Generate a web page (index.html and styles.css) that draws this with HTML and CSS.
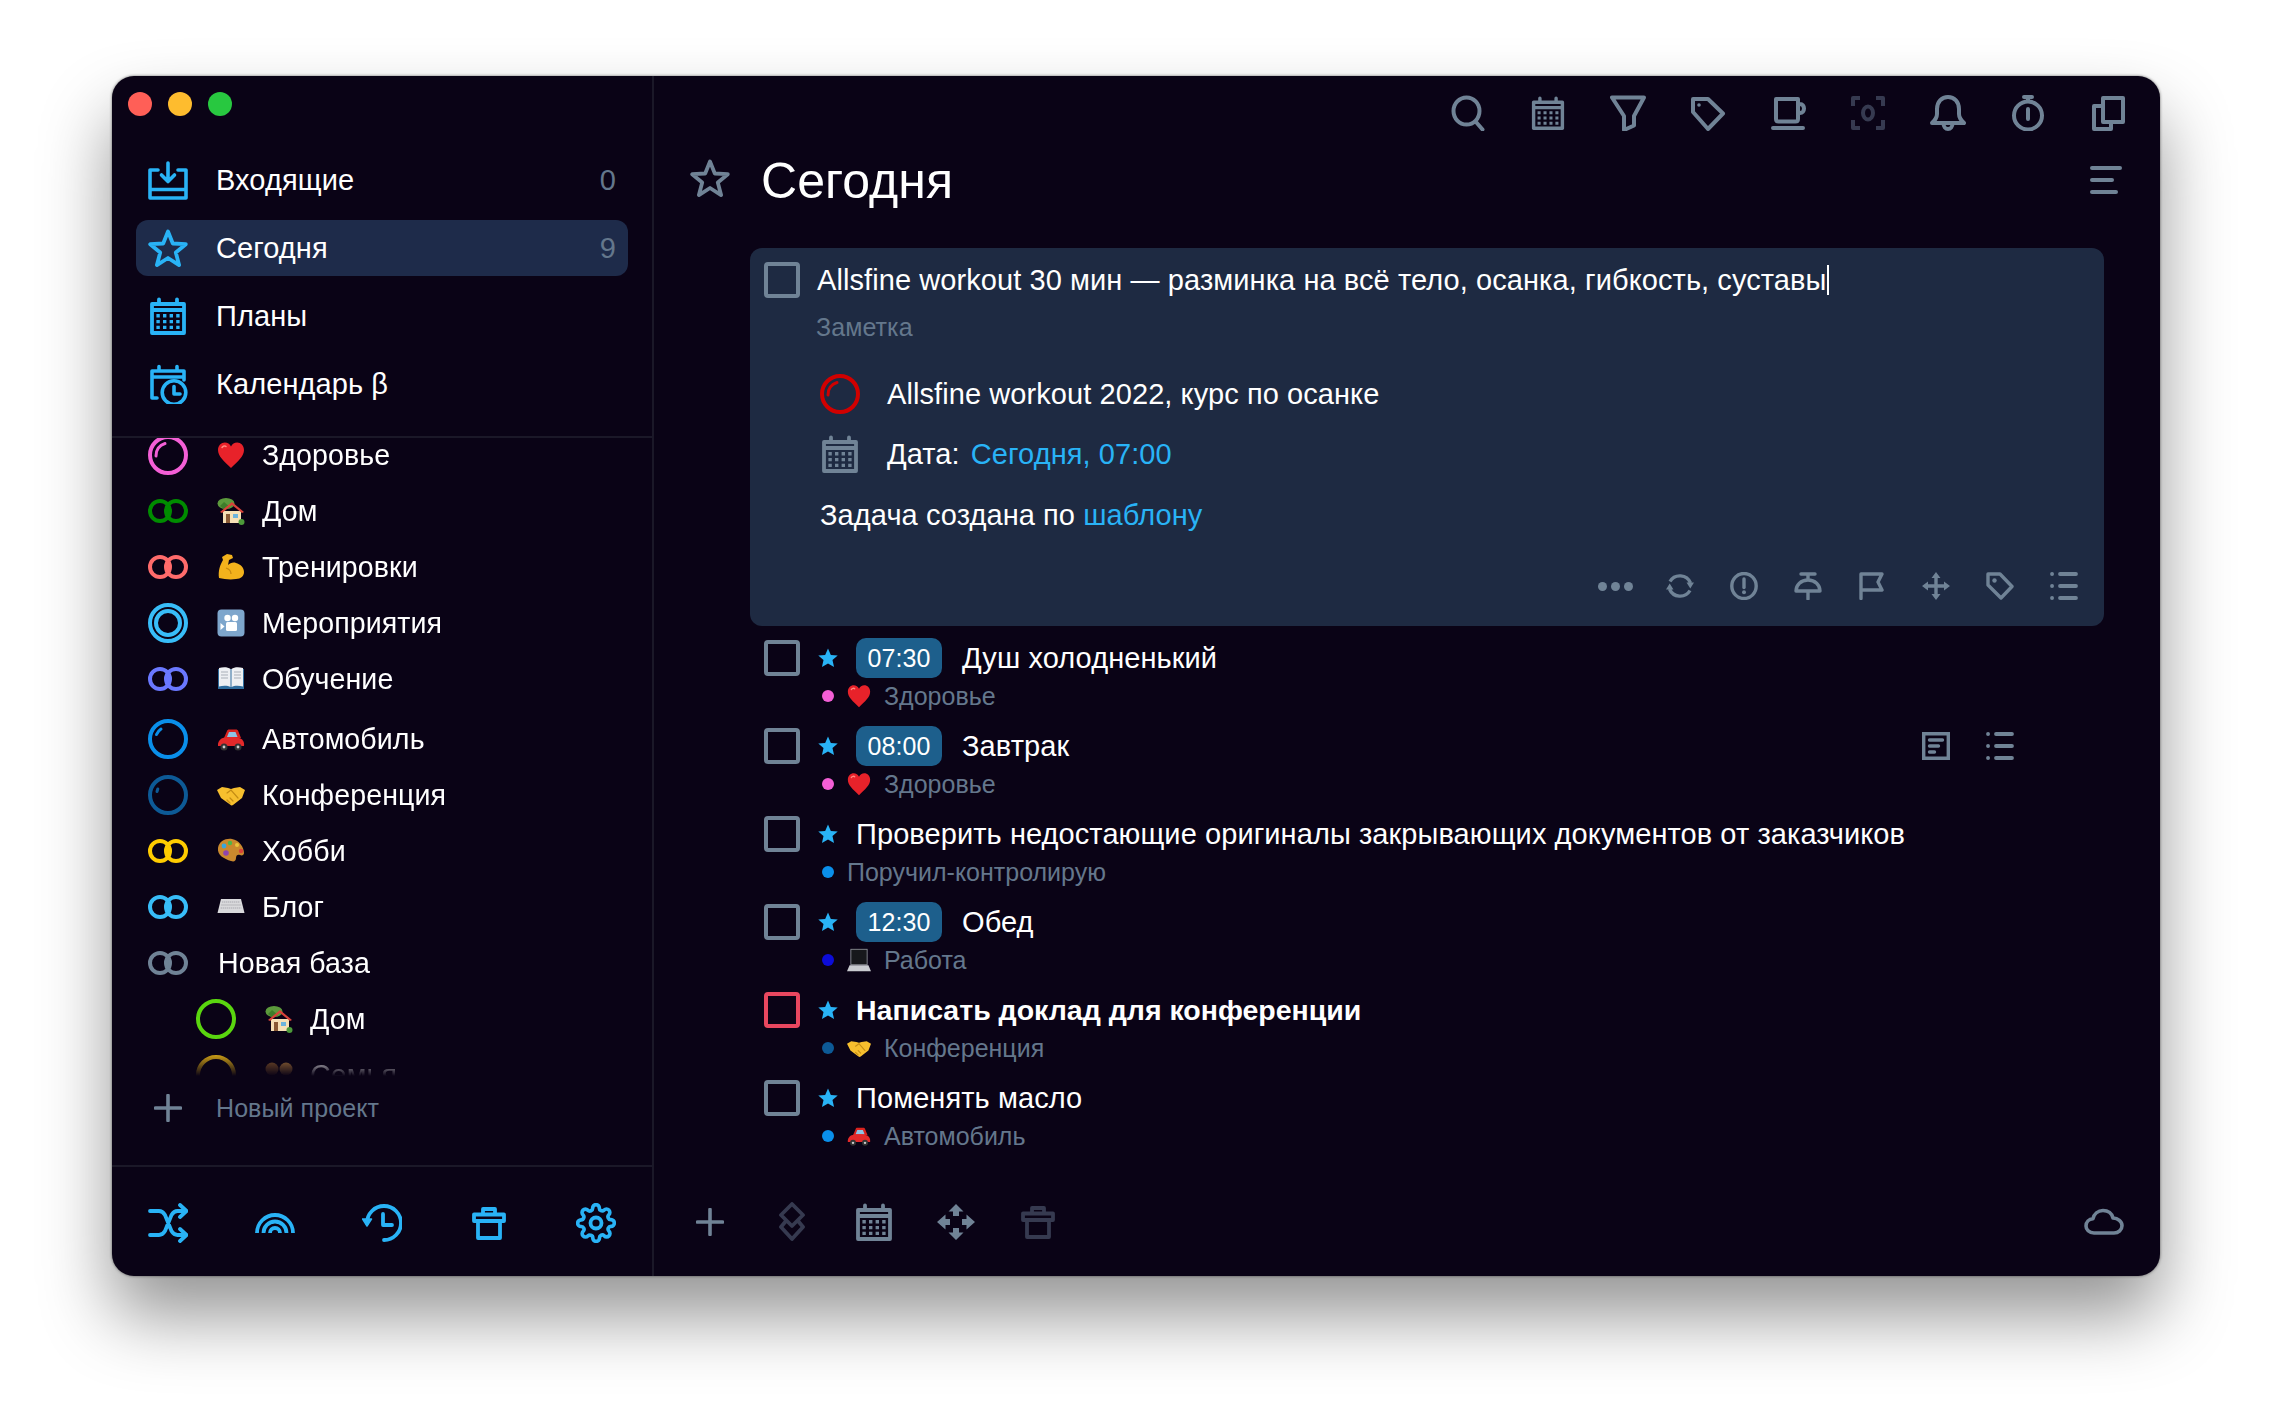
FILE: index.html
```html
<!DOCTYPE html>
<html lang="ru">
<head>
    <meta charset="UTF-8">
    <title>Сегодня</title>
    <link rel="stylesheet" href="styles.css">
</head>
<body>

<!-- Icon sprite -->
<svg class="sprite" xmlns="http://www.w3.org/2000/svg">
    <symbol id="i-inbox" viewBox="0 0 40 40"><path d="M10 10H2v28h36V10h-8M2 29.500h36M20 3v18M13.500 15l6.500 6.500 6.500-6.500" fill="none" stroke="currentColor" stroke-width="3.600" stroke-linejoin="round" stroke-linecap="round"/></symbol>
    <symbol id="i-star" viewBox="0 0 40 40"><path d="M20 3.500l4.800 12 13 .7-10 8.300 3.300 12.600L20 30l-11.100 7.100 3.300-12.600-10-8.300 13-.7z" fill="none" stroke="currentColor" stroke-width="3.800" stroke-linejoin="round"/></symbol>
    <symbol id="i-star-solid" viewBox="0 0 24 24"><path d="M12 1.500l3.100 7.100 7.500.7-5.700 5 1.700 7.500-6.600-3.900-6.600 3.900 1.700-7.500-5.700-5 7.500-.7z" fill="currentColor"/></symbol>
    <symbol id="i-cal" viewBox="0 0 40 40"><path d="M4 8h32v29H4zM4 14h32M11 3.500V8M29 3.500V8" fill="none" stroke="currentColor" stroke-width="3.800" stroke-linejoin="round" stroke-linecap="round"/><path d="M8.400 19.800h23.200M8.400 25.600h23.200M8.400 31.400h23.200" fill="none" stroke="currentColor" stroke-width="3.400" stroke-dasharray="3.400 3.200"/></symbol>
    <symbol id="i-cal-clock" viewBox="0 0 40 40"><path d="M4 34V7h32v9M4 13h32M11 2.500V7M29 2.500V7M4 34h5" fill="none" stroke="currentColor" stroke-width="3.600" stroke-linejoin="round" stroke-linecap="round"/><circle cx="26" cy="28.500" r="11.800" fill="#0a0316" stroke="currentColor" stroke-width="3.600"/><path d="M26 22.500v7.500h6" fill="none" stroke="currentColor" stroke-width="3.600" stroke-linecap="round" stroke-linejoin="round"/></symbol>

    <symbol id="i-ring-a" viewBox="0 0 40 40"><circle cx="20" cy="20" r="18" fill="none" stroke="currentColor" stroke-width="4"/><path d="M8 21A12 12 0 0 1 17 8.500" fill="none" stroke="currentColor" stroke-width="3" stroke-linecap="round"/></symbol>
    <symbol id="i-ring-b" viewBox="0 0 40 40"><circle cx="20" cy="20" r="18" fill="none" stroke="currentColor" stroke-width="4"/><path d="M8.500 15.500A12 12 0 0 1 13 10" fill="none" stroke="currentColor" stroke-width="3" stroke-linecap="round"/></symbol>
    <symbol id="i-ring-c" viewBox="0 0 40 40"><circle cx="20" cy="20" r="18" fill="none" stroke="currentColor" stroke-width="4"/><path d="M9 16.500l.8-2.500" fill="none" stroke="currentColor" stroke-width="3" stroke-linecap="round"/></symbol>
    <symbol id="i-ring-link" viewBox="0 0 40 40"><circle cx="12" cy="20" r="10" fill="none" stroke="currentColor" stroke-width="4"/><circle cx="28" cy="20" r="10" fill="none" stroke="currentColor" stroke-width="4"/></symbol>
    <symbol id="i-ring-target" viewBox="0 0 40 40"><circle cx="20" cy="20" r="18" fill="none" stroke="currentColor" stroke-width="4"/><circle cx="20" cy="20" r="12" fill="none" stroke="currentColor" stroke-width="4"/></symbol>
    <symbol id="i-ring" viewBox="0 0 40 40"><circle cx="20" cy="20" r="18" fill="none" stroke="currentColor" stroke-width="4"/></symbol>

    <symbol id="i-plus" viewBox="0 0 28 28"><path d="M14 1.500v25M1.500 14h25" fill="none" stroke="currentColor" stroke-width="3.600" stroke-linecap="round"/></symbol>
    <symbol id="i-shuffle" viewBox="0 0 40 40"><path d="M2 8h9c3 0 4.500 1.500 6 4l6.500 16c1.500 2.500 3 4 6 4h8M2 32h9c3 0 4.500-1.500 6-4l6.500-16c1.500-2.500 3-4 6-4h8M32 2l6.500 6-6.500 6M32 26l6.500 6-6.500 6" fill="none" stroke="currentColor" stroke-width="3.800" stroke-linecap="round" stroke-linejoin="round"/></symbol>
    <symbol id="i-rainbow" viewBox="0 0 40 40"><path d="M2 30A18 18 0 0 1 38 30M8.500 30A11.500 11.500 0 0 1 31.500 30M15 30A5 5 0 0 1 25 30" fill="none" stroke="currentColor" stroke-width="3.800"/></symbol>
    <symbol id="i-history" viewBox="0 0 40 40"><path d="M5 20A17 17 0 1 1 22 37M21 11v11h9" fill="none" stroke="currentColor" stroke-width="3.800" stroke-linecap="round" stroke-linejoin="round"/><path d="M.500 16h9l-4.500 7z" fill="currentColor" stroke="currentColor" stroke-linejoin="round" stroke-width="1.500"/></symbol>
    <symbol id="i-trash" viewBox="0 0 40 40"><path d="M9 18v17h22V18M5 11.500h30V18H5zM14 11.500V6h12v5.500" fill="none" stroke="currentColor" stroke-width="3.800" stroke-linejoin="round" stroke-linecap="round"/></symbol>
    <symbol id="i-gear" viewBox="0 0 24 24"><circle cx="12" cy="12" r="3.300" fill="none" stroke="currentColor" stroke-width="2.300"/><path d="M19.400 15a1.650 1.650 0 0 0 .33 1.820l.06.06a2 2 0 0 1 0 2.830 2 2 0 0 1-2.830 0l-.06-.06a1.650 1.650 0 0 0-1.820-.33 1.650 1.650 0 0 0-1 1.510V21a2 2 0 0 1-2 2 2 2 0 0 1-2-2v-.09A1.650 1.650 0 0 0 9 19.400a1.650 1.650 0 0 0-1.820.33l-.06.06a2 2 0 0 1-2.830 0 2 2 0 0 1 0-2.830l.06-.06a1.650 1.650 0 0 0 .33-1.820 1.650 1.650 0 0 0-1.510-1H3a2 2 0 0 1-2-2 2 2 0 0 1 2-2h.09A1.650 1.650 0 0 0 4.600 9a1.650 1.650 0 0 0-.33-1.820l-.06-.06a2 2 0 0 1 0-2.830 2 2 0 0 1 2.830 0l.06.06a1.650 1.650 0 0 0 1.820.33H9a1.650 1.650 0 0 0 1-1.510V3a2 2 0 0 1 2-2 2 2 0 0 1 2 2v.09a1.650 1.650 0 0 0 1 1.510 1.650 1.650 0 0 0 1.820-.33l.06-.06a2 2 0 0 1 2.830 0 2 2 0 0 1 0 2.830l-.06.06a1.650 1.650 0 0 0-.33 1.820V9a1.650 1.650 0 0 0 1.510 1H21a2 2 0 0 1 2 2 2 2 0 0 1-2 2h-.09a1.650 1.650 0 0 0-1.510 1z" fill="none" stroke="currentColor" stroke-width="2.200" stroke-linejoin="round"/></symbol>

    <symbol id="i-search" viewBox="0 0 36 36"><ellipse cx="16.500" cy="16" rx="13" ry="13.500" fill="none" stroke="currentColor" stroke-width="4"/><path d="M26 27l6.500 7.500" fill="none" stroke="currentColor" stroke-width="4" stroke-linecap="round"/></symbol>
    <symbol id="i-filter" viewBox="0 0 36 36"><path d="M2 2.500h32L24 21v9.500l-10 4.500V21z" fill="none" stroke="currentColor" stroke-width="4" stroke-linejoin="round"/></symbol>
    <symbol id="i-tag-top" viewBox="0 0 36 36"><path d="M3 4h15l15 14.500L18 34 3 17z" fill="none" stroke="currentColor" stroke-width="4" stroke-linejoin="round"/><circle cx="9" cy="10" r="1.800" fill="currentColor"/></symbol>
    <symbol id="i-coffee" viewBox="0 0 36 36"><path d="M6 4h22v20c0 1.500-1 2.500-2.500 2.500h-17C7 26.500 6 25.500 6 24zM28 9h2c2.500 0 4 2 4 4.500s-1.500 4.500-4 4.500h-2M3 33h30" fill="none" stroke="currentColor" stroke-width="4" stroke-linejoin="round" stroke-linecap="round"/></symbol>
    <symbol id="i-focus" viewBox="0 0 36 36"><path d="M10 3H3v8M26 3h7v8M10 33H3v-8M26 33h7v-8" fill="none" stroke="currentColor" stroke-width="4" stroke-linejoin="round"/><ellipse cx="18" cy="18" rx="5" ry="6.500" fill="none" stroke="currentColor" stroke-width="4"/></symbol>
    <symbol id="i-bell" viewBox="0 0 36 36"><path d="M2 28c3-3 5-5 5-9v-5C7 7 11.500 2 18 2s11 5 11 12v5c0 4 2 6 5 9zM13.500 28.500c0 3 2 5.500 4.500 5.500s4.500-2.500 4.500-5.500" fill="none" stroke="currentColor" stroke-width="4" stroke-linejoin="round"/></symbol>
    <symbol id="i-timer" viewBox="0 0 36 36"><circle cx="18" cy="20.500" r="14" fill="none" stroke="currentColor" stroke-width="4"/><path d="M14 2h8M18 2v4M18 14v10" fill="none" stroke="currentColor" stroke-width="4" stroke-linecap="round"/></symbol>
    <symbol id="i-copy" viewBox="0 0 36 36"><path d="M13 3h20v24H13zM13 11H4v23h17v-7" fill="none" stroke="currentColor" stroke-width="4" stroke-linejoin="round"/></symbol>

    <symbol id="i-sync" viewBox="0 0 28 28"><path d="M4 9.500A11.500 11.500 0 0 1 24.500 11M24 18.500A11.500 11.500 0 0 1 3.500 17" fill="none" stroke="currentColor" stroke-width="3.400"/><path d="M20.500 10.500h7.500l-3.700 6zM0 17.500h7.500l-3.800-6z" fill="currentColor"/></symbol>
    <symbol id="i-alert" viewBox="0 0 28 28"><ellipse cx="14" cy="14" rx="12.200" ry="12.500" fill="none" stroke="currentColor" stroke-width="3.400"/><path d="M14 7v8.500" fill="none" stroke="currentColor" stroke-width="3.400" stroke-linecap="round"/><circle cx="14" cy="20.300" r="2" fill="currentColor"/></symbol>
    <symbol id="i-pin" viewBox="0 0 28 28"><path d="M7 2h14M14 2v6M2 19c0-6 5-11 12-11s12 5 12 11zM14 19v8" fill="none" stroke="currentColor" stroke-width="3.400" stroke-linejoin="round" stroke-linecap="round"/></symbol>
    <symbol id="i-flag" viewBox="0 0 28 28"><path d="M3 26.500V2h21l-4 8 4 8H3" fill="none" stroke="currentColor" stroke-width="3.400" stroke-linejoin="round" stroke-linecap="round"/></symbol>
    <symbol id="i-move" viewBox="0 0 28 28"><path d="M14 4v20M4 14h20" fill="none" stroke="currentColor" stroke-width="3.400"/><path d="M14 0l4.500 6h-9zM14 28l4.500-6h-9zM0 14l6-4.500v9zM28 14l-6-4.500v9z" fill="currentColor"/></symbol>
    <symbol id="i-tag" viewBox="0 0 28 28"><path d="M2 2h12l12 12.500L15 26 2 13z" fill="none" stroke="currentColor" stroke-width="3.400" stroke-linejoin="round"/><circle cx="8.500" cy="8.500" r="2.200" fill="currentColor"/></symbol>
    <symbol id="i-list" viewBox="0 0 28 28"><path d="M10 2h16M10 14h16M10 26h16" fill="none" stroke="currentColor" stroke-width="3.800" stroke-linecap="round"/><path d="M2 2h.1M2 14h.1M2 26h.1" fill="none" stroke="currentColor" stroke-width="3.800" stroke-linecap="round"/></symbol>
    <symbol id="i-note" viewBox="0 0 28 28"><path d="M1.700 1.700h24.600v24.600H1.700z" fill="none" stroke="currentColor" stroke-width="3.400"/><path d="M7.500 8h13M7.500 14h9M7.500 20h5" fill="none" stroke="currentColor" stroke-width="3.400" stroke-linecap="round"/></symbol>

    <symbol id="i-layers" viewBox="0 0 40 40"><path d="M20 2l11 11-11 11L9 13zM13.500 19.500L9 25l11 12 11-12-4.500-5.500" fill="none" stroke="currentColor" stroke-width="3.800" stroke-linejoin="round"/></symbol>
    <symbol id="i-arrows" viewBox="0 0 40 40"><path d="M20 2l7.500 7.500H23V14h-6V9.500h-4.500zM20 38l7.500-7.500H23V26h-6v4.500h-4.500zM1 20l8.500-7.500V17H14v6H9.500v4.500zM39 20l-8.500-7.500V17H26v6h4.500v4.500z" fill="currentColor"/></symbol>
    <symbol id="i-cloud" viewBox="0 0 40 40"><path d="M10 31C5 31 2 27.500 2 24c0-4 3-7 7-7.300C10 12 14 8.500 19 8.500c5 0 9 3 10 7.500 5 .2 9 3.500 9 7.800 0 4-3.500 7.200-8 7.200z" fill="none" stroke="currentColor" stroke-width="3.600" stroke-linejoin="round"/></symbol>

    <!-- Emoji -->
    <symbol id="e-heart" viewBox="0 0 28 28"><path d="M14 27C7 20 1 15.500 1 9c0-4.500 3.200-7.500 6.800-7.500 2.800 0 5 1.500 6.200 4 1.200-2.500 3.400-4 6.200-4C23.800 1.500 27 4.500 27 9c0 6.500-6 11-13 18z" fill="#e8222a"/><path d="M5 6.500c1-1.500 3-2 4-1" fill="none" stroke="#ff8a80" stroke-width="1.500" stroke-linecap="round"/></symbol>
    <symbol id="e-house" viewBox="0 0 28 28"><ellipse cx="9" cy="6.500" rx="8.500" ry="5.500" fill="#5c9a3c"/><path d="M3 9l4-4 6 5-5 3z" fill="#3f7d2a"/><path d="M6 14v12h18V14z" fill="#f6e0b5"/><path d="M3 15L15 5l12 10-2 1-10-8-10 8z" fill="#d9433a"/><rect x="9" y="17" width="4" height="9" fill="#8a5a35"/><rect x="16" y="17" width="5" height="4" fill="#6db4dc"/><circle cx="24.500" cy="25" r="3" fill="#4d9a3a"/></symbol>
    <symbol id="e-arm" viewBox="0 0 28 28"><path d="M2 25c-1-7 1-13 4-18l-1-3 5-3 5 1 1 3-4 2-1 5c2-2 5-3 8-2 4 1 8 4 8 9 0 4-3 7-8 7-6 1-12 0-17-1z" fill="#f3b21c"/><path d="M9 15c3 1 5 3 5 6" fill="none" stroke="#c78a10" stroke-width="1.300"/></symbol>
    <symbol id="e-camera" viewBox="0 0 28 28"><rect x="0.500" y="0.500" width="27" height="27" rx="4" fill="#7ea6cc"/><circle cx="10.500" cy="9" r="3.200" fill="#fff"/><circle cx="18" cy="9" r="3.200" fill="#fff"/><rect x="9" y="13" width="11" height="9" rx="1.500" fill="#fff"/><path d="M3.500 14l4 3.500-4 3.500z" fill="#fff"/></symbol>
    <symbol id="e-book" viewBox="0 0 28 28"><path d="M1 4v20h26V4z" fill="#2f6d9e"/><path d="M2 3c4-1 9-1 11.500 1v18C11 20.500 6 20.500 2 21.500zM26 3c-4-1-9-1-11.500 1v18c2.500-1.500 7.500-1.500 11.500-.5z" fill="#eef0f3"/><path d="M4 7h7M4 10h7M4 13h7M17 7h7M17 10h7M17 13h7" stroke="#a9afb8" stroke-width="1"/></symbol>
    <symbol id="e-car" viewBox="0 0 28 28"><path d="M7 13l3-7c.4-1 1-1.500 2-1.500h7c1 0 1.800.5 2.200 1.500l2.800 7z" fill="#d9231f"/><path d="M10 12l2-5h6.500l2 5z" fill="#8fc3e4"/><path d="M1 21c-.5-3 1-6 3.500-7.500 5-2 14-2 19 0 2.500 1 4 4 3.500 7.500z" fill="#e3292a"/><circle cx="7" cy="22" r="3.500" fill="#333"/><circle cx="21" cy="22" r="3.500" fill="#333"/><circle cx="7" cy="22" r="1.400" fill="#ccc"/><circle cx="21" cy="22" r="1.400" fill="#ccc"/></symbol>
    <symbol id="e-shake" viewBox="0 0 28 28"><path d="M0 9l5-3 6 1 3 1 3-1 6-1 5 3-3 8-9 7c-1 .8-2 .5-3-.5L4 17z" fill="#f7bf2e"/><path d="M10 12l4-3 7 8M13 17l3 3M10 19l3 3" fill="none" stroke="#c48c14" stroke-width="1.200" stroke-linecap="round"/></symbol>
    <symbol id="e-palette" viewBox="0 0 28 28"><path d="M1 11C2 4 9 1 15 2c7 1 12 8 12 14 0 2-2 3-4 2-2-1-4 0-4 3s-2 4-5 3C7 22 0 18 1 11z" fill="#c9892e"/><circle cx="7" cy="9" r="2.400" fill="#35a7e0"/><circle cx="13" cy="6" r="2.200" fill="#4eb649"/><circle cx="20" cy="8" r="2" fill="#e9c43a"/><circle cx="24" cy="14" r="2.200" fill="#d9433a"/><circle cx="9" cy="16" r="2.800" fill="#8e44ad"/></symbol>
    <symbol id="e-keyboard" viewBox="0 0 28 28"><path d="M4 6h20l3.500 14H.500z" fill="#d9d9dc"/><path d="M5 9h18M4.300 12h19.400M3.600 15h20.800" stroke="#a8a8ad" stroke-width="1.200" stroke-dasharray="1.400 .6"/></symbol>
    <symbol id="e-laptop" viewBox="0 0 28 28"><path d="M4 1h20v19H4z" fill="#8f9299"/><path d="M5 2h18v17H5z" fill="#17181c"/><path d="M3 20h22l3 7H0z" fill="#c9cbd0"/></symbol>
    <symbol id="e-family" viewBox="0 0 28 28"><path d="M0 20c0-3 3-5 6-5s7 2 7 5v8H0zM15 20c0-3 3-5 6-5s7 2 7 5v8H15z" fill="#7a2c3a"/><circle cx="7" cy="8" r="6.500" fill="#8a5a2c"/><circle cx="21" cy="8" r="6.500" fill="#b07a3c"/></symbol>
</svg>

<div class="window">

    <!-- Sidebar -->
    <aside class="sidebar">
        <div class="traffic">
            <span class="light light-red"></span>
            <span class="light light-yellow"></span>
            <span class="light light-green"></span>
        </div>

        <nav class="nav">
            <a class="nav-item"><svg class="icon-40 blue"><use href="#i-inbox"/></svg><span class="nav-label">Входящие</span><span class="nav-count">0</span></a>
            <a class="nav-item active"><svg class="icon-40 blue"><use href="#i-star"/></svg><span class="nav-label">Сегодня</span><span class="nav-count">9</span></a>
            <a class="nav-item"><svg class="icon-40 blue"><use href="#i-cal"/></svg><span class="nav-label">Планы</span></a>
            <a class="nav-item"><svg class="icon-40 blue"><use href="#i-cal-clock"/></svg><span class="nav-label">Календарь β</span></a>
        </nav>

        <div class="projects">
            <div class="projects-inner">
                <div class="project"><svg class="icon-40 c-pink"><use href="#i-ring-a"/></svg><svg class="emoji"><use href="#e-heart"/></svg><span>Здоровье</span></div>
                <div class="project"><svg class="icon-40 c-green"><use href="#i-ring-link"/></svg><svg class="emoji"><use href="#e-house"/></svg><span>Дом</span></div>
                <div class="project"><svg class="icon-40 c-coral"><use href="#i-ring-link"/></svg><svg class="emoji"><use href="#e-arm"/></svg><span>Тренировки</span></div>
                <div class="project"><svg class="icon-40 c-sky"><use href="#i-ring-target"/></svg><svg class="emoji"><use href="#e-camera"/></svg><span>Мероприятия</span></div>
                <div class="project"><svg class="icon-40 c-violet"><use href="#i-ring-link"/></svg><svg class="emoji"><use href="#e-book"/></svg><span>Обучение</span></div>
                <div class="project project-gap"><svg class="icon-40 c-blue"><use href="#i-ring-b"/></svg><svg class="emoji"><use href="#e-car"/></svg><span>Автомобиль</span></div>
                <div class="project"><svg class="icon-40 c-navy"><use href="#i-ring-c"/></svg><svg class="emoji"><use href="#e-shake"/></svg><span>Конференция</span></div>
                <div class="project"><svg class="icon-40 c-yellow"><use href="#i-ring-link"/></svg><svg class="emoji"><use href="#e-palette"/></svg><span>Хобби</span></div>
                <div class="project"><svg class="icon-40 c-sky"><use href="#i-ring-link"/></svg><svg class="emoji"><use href="#e-keyboard"/></svg><span>Блог</span></div>
                <div class="project project-base"><svg class="icon-40 c-gray"><use href="#i-ring-link"/></svg><span>Новая база</span></div>
                <div class="project project-sub"><svg class="icon-40 c-lime"><use href="#i-ring"/></svg><svg class="emoji"><use href="#e-house"/></svg><span>Дом</span></div>
                <div class="project project-sub"><svg class="icon-40 c-gold"><use href="#i-ring"/></svg><svg class="emoji"><use href="#e-family"/></svg><span>Семья</span></div>
            </div>
        </div>

        <div class="add-project"><svg class="icon-28 gray"><use href="#i-plus"/></svg><span>Новый проект</span></div>

        <div class="side-footer">
            <svg class="icon-40 blue"><use href="#i-shuffle"/></svg>
            <svg class="icon-40 blue"><use href="#i-rainbow"/></svg>
            <svg class="icon-40 blue"><use href="#i-history"/></svg>
            <svg class="icon-40 blue"><use href="#i-trash"/></svg>
            <svg class="icon-40 blue"><use href="#i-gear"/></svg>
        </div>
    </aside>

    <!-- Main column -->
    <main class="main">
        <div class="toolbar">
            <svg class="icon-36 gray"><use href="#i-search"/></svg>
            <svg class="icon-36 gray"><use href="#i-cal"/></svg>
            <svg class="icon-36 gray"><use href="#i-filter"/></svg>
            <svg class="icon-36 gray"><use href="#i-tag-top"/></svg>
            <svg class="icon-36 gray"><use href="#i-coffee"/></svg>
            <svg class="icon-36 dim"><use href="#i-focus"/></svg>
            <svg class="icon-36 gray"><use href="#i-bell"/></svg>
            <svg class="icon-36 gray"><use href="#i-timer"/></svg>
            <svg class="icon-36 gray"><use href="#i-copy"/></svg>
        </div>

        <header class="page-head">
            <svg class="icon-40 gray head-star"><use href="#i-star"/></svg>
            <h1>Сегодня</h1>
            <div class="menu-lines"><span></span><span></span><span></span></div>
        </header>

        <!-- Opened task -->
        <section class="card">
            <div class="card-title">
                <span class="check"></span>
                <span class="caret">Allsfine workout 30 мин — разминка на всё тело, осанка, гибкость, суставы</span>
            </div>
            <div class="card-note">Заметка</div>
            <div class="card-line card-project"><svg class="icon-40 c-red"><use href="#i-ring-a"/></svg><span>Allsfine workout 2022, курс по осанке</span></div>
            <div class="card-line card-date"><svg class="icon-40 gray"><use href="#i-cal"/></svg><span>Дата: <a class="link">Сегодня, 07:00</a></span></div>
            <div class="card-line card-made"><span>Задача создана по <a class="link">шаблону</a></span></div>
            <div class="card-tools">
                <span class="dots"><i></i><i></i><i></i></span>
                <svg class="icon-28 gray"><use href="#i-sync"/></svg>
                <svg class="icon-28 gray"><use href="#i-alert"/></svg>
                <svg class="icon-28 gray"><use href="#i-pin"/></svg>
                <svg class="icon-28 gray"><use href="#i-flag"/></svg>
                <svg class="icon-28 gray"><use href="#i-move"/></svg>
                <svg class="icon-28 gray"><use href="#i-tag"/></svg>
                <svg class="icon-28 gray"><use href="#i-list"/></svg>
            </div>
        </section>

        <!-- Tasks -->
        <section class="tasks">
            <div class="task">
                <div class="task-top"><span class="check"></span><svg class="star blue"><use href="#i-star-solid"/></svg><span class="time">07:30</span><span class="task-name">Душ холодненький</span></div>
                <div class="task-sub"><span class="dot c-pink"></span><svg class="emoji-sm"><use href="#e-heart"/></svg><span>Здоровье</span></div>
            </div>
            <div class="task">
                <div class="task-top"><span class="check"></span><svg class="star blue"><use href="#i-star-solid"/></svg><span class="time">08:00</span><span class="task-name">Завтрак</span>
                    <span class="task-icons"><svg class="icon-28 gray"><use href="#i-note"/></svg><svg class="icon-28 gray"><use href="#i-list"/></svg></span>
                </div>
                <div class="task-sub"><span class="dot c-pink"></span><svg class="emoji-sm"><use href="#e-heart"/></svg><span>Здоровье</span></div>
            </div>
            <div class="task">
                <div class="task-top"><span class="check"></span><svg class="star blue"><use href="#i-star-solid"/></svg><span class="task-name">Проверить недостающие оригиналы закрывающих документов от заказчиков</span></div>
                <div class="task-sub"><span class="dot c-blue"></span><span>Поручил-контролирую</span></div>
            </div>
            <div class="task">
                <div class="task-top"><span class="check"></span><svg class="star blue"><use href="#i-star-solid"/></svg><span class="time">12:30</span><span class="task-name">Обед</span></div>
                <div class="task-sub"><span class="dot c-indigo"></span><svg class="emoji-sm"><use href="#e-laptop"/></svg><span>Работа</span></div>
            </div>
            <div class="task">
                <div class="task-top"><span class="check check-red"></span><svg class="star blue"><use href="#i-star-solid"/></svg><span class="task-name task-bold">Написать доклад для конференции</span></div>
                <div class="task-sub"><span class="dot c-navy"></span><svg class="emoji-sm"><use href="#e-shake"/></svg><span>Конференция</span></div>
            </div>
            <div class="task">
                <div class="task-top"><span class="check"></span><svg class="star blue"><use href="#i-star-solid"/></svg><span class="task-name">Поменять масло</span></div>
                <div class="task-sub"><span class="dot c-blue"></span><svg class="emoji-sm"><use href="#e-car"/></svg><span>Автомобиль</span></div>
            </div>
        </section>

        <div class="bottom-bar">
            <svg class="icon-40 gray icon-plus"><use href="#i-plus"/></svg>
            <svg class="icon-40 dim"><use href="#i-layers"/></svg>
            <svg class="icon-40 gray"><use href="#i-cal"/></svg>
            <svg class="icon-40 gray"><use href="#i-arrows"/></svg>
            <svg class="icon-40 dim"><use href="#i-trash"/></svg>
            <svg class="icon-40 gray cloud"><use href="#i-cloud"/></svg>
        </div>
    </main>
</div>

</body>
</html>
```

FILE: styles.css
```css
/* Global */
* {
    box-sizing: border-box;
}

body {
    margin: 0;
    height: 1424px;
    padding: 76px 0 0 112px;
    background-color: #fff;
    color: #fff;
    font-family: "Liberation Sans", "Noto Sans", sans-serif;
    font-size: 29px;
    letter-spacing: 0.08px;
    overflow: hidden;
}

.sprite {
    display: none;
}

svg {
    display: block;
    flex: none;
}

.icon-40 { width: 40px; height: 40px; }
.icon-36 { width: 36px; height: 36px; }
.icon-28 { width: 28px; height: 28px; }

.blue { color: #29b3f6; }
.gray { color: #708396; }
.dim { color: #363a50; }

.c-pink { color: #f45fd6; }
.c-green { color: #008c00; }
.c-coral { color: #ff6b6b; }
.c-sky { color: #38bdf8; }
.c-violet { color: #6a78ff; }
.c-blue { color: #0a8fea; }
.c-navy { color: #0d5a96; }
.c-yellow { color: #ffcc00; }
.c-gray { color: #708396; }
.c-lime { color: #5ad60f; }
.c-gold { color: #d4a517; }
.c-red { color: #d10000; }
.c-indigo { color: #0c0cd8; }

/* Window */
.window {
    display: flex;
    width: 2048px;
    height: 1200px;
    background-color: #0a0316;
    border-radius: 22px;
    overflow: hidden;
    box-shadow: 0 40px 70px rgba(0, 0, 0, 0.42), 0 0 3px rgba(0, 0, 0, 0.55);
}

/* Sidebar */
.sidebar {
    display: flex;
    flex-direction: column;
    width: 542px;
    flex: none;
    border-right: 2px solid #1b1828;
}

.traffic {
    display: flex;
    gap: 16px;
    height: 76px;
    padding: 16px 0 0 16px;
}

.light {
    width: 24px;
    height: 24px;
    border-radius: 50%;
}

.light-red { background-color: #ff5f57; }
.light-yellow { background-color: #febc2e; }
.light-green { background-color: #28c840; }

.nav {
    display: flex;
    flex-direction: column;
    gap: 12px;
    padding: 0 24px 24px;
}

.nav-item {
    display: flex;
    align-items: center;
    height: 56px;
    padding: 0 12px;
    border-radius: 12px;
}

.nav-item.active {
    background-color: #1e2b4a;
}

.nav-label {
    margin-left: 28px;
}

.nav-count {
    margin-left: auto;
    color: #64778c;
}

.projects {
    height: 640px;
    flex: none;
    border-top: 2px solid #1b1828;
    overflow: hidden;
    -webkit-mask-image: linear-gradient(to bottom, #000 calc(100% - 22px), transparent);
    mask-image: linear-gradient(to bottom, #000 calc(100% - 22px), transparent);
}

.projects-inner {
    margin-top: -11px;
}

.project {
    display: flex;
    align-items: center;
    height: 56px;
    padding-left: 36px;
    font-size: 28.6px;
}

.project-gap {
    margin-top: 4px;
}

.project-sub {
    padding-left: 84px;
}

.emoji {
    width: 28px;
    height: 28px;
    margin: 0 17px 0 29px;
}

.project-base span {
    margin-left: 30px;
}

.add-project {
    display: flex;
    align-items: center;
    height: 64px;
    padding-left: 42px;
    color: #64778c;
    font-size: 25px;
}

.add-project span {
    margin-left: 34px;
}

.side-footer {
    display: flex;
    align-items: center;
    justify-content: space-between;
    margin-top: auto;
    height: 111px;
    padding: 2px 36px 0;
    border-top: 2px solid #1b1828;
}

/* Main */
.main {
    display: flex;
    flex-direction: column;
    flex: 1;
    min-width: 0;
}

.toolbar {
    display: flex;
    justify-content: flex-end;
    gap: 44px;
    padding: 19px 34px 0 0;
}

.page-head {
    display: flex;
    align-items: center;
    height: 60px;
    margin-top: 21px;
    padding: 0 38px 0 36px;
}

.head-star {
    margin-bottom: 8px;
}

.page-head h1 {
    margin: 0 0 3px 31px;
    font-size: 50px;
    font-weight: normal;
}

.menu-lines {
    display: flex;
    flex-direction: column;
    gap: 8px;
    margin: 0 0 4px auto;
    width: 32px;
}

.menu-lines span {
    height: 4px;
    border-radius: 2px;
    background-color: #708396;
}

.menu-lines span:nth-child(2) { width: 24px; }
.menu-lines span:nth-child(3) { width: 28px; }

/* Opened task */
.card {
    height: 378px;
    margin: 36px 56px 0 96px;
    padding: 14px 26px 0 14px;
    background-color: #1e2a42;
    border-radius: 12px;
}

.check {
    display: block;
    flex: none;
    width: 36px;
    height: 36px;
    border: 4px solid #708396;
    border-radius: 4px;
}

.check-red {
    border-color: #e8475f;
}

.card-title {
    display: flex;
    align-items: center;
    gap: 17px;
}

.caret {
    padding: 0 1px 0 0;
    border-right: 2px solid #fff;
    line-height: 30px;
}

.card-note {
    margin: 14px 0 0 52px;
    color: #64778c;
    font-size: 25px;
    line-height: 30px;
}

.card-line {
    display: flex;
    align-items: center;
    gap: 27px;
    height: 40px;
    margin-left: 56px;
}

.card-project { margin-top: 32px; }
.card-date { margin-top: 20px; }
.card-made { margin-top: 21px; }

.link {
    color: #29b3f6;
}

.card-date .link {
    margin-left: 3px;
}

.card-tools {
    display: flex;
    justify-content: flex-end;
    align-items: center;
    gap: 36px;
    margin-top: 37px;
}

.dots {
    display: flex;
    gap: 4px;
    width: 36px;
    margin-right: -4px;
}

.dots i {
    width: 9px;
    height: 9px;
    border-radius: 50%;
    background-color: #708396;
}

/* Task list */
.tasks {
    margin: 12px 146px 0 110px;
}

.task {
    height: 88px;
}

.task-top {
    display: flex;
    align-items: center;
    height: 40px;
}

.star {
    width: 22px;
    height: 22px;
    margin: 0 17px;
}

.time {
    width: 86px;
    height: 40px;
    margin-right: 20px;
    background-color: #1d5f8c;
    border-radius: 10px;
    font-size: 25px;
    line-height: 40px;
    text-align: center;
}

.task-bold {
    font-size: 28.5px;
    font-weight: bold;
    letter-spacing: 0;
}

.task-icons {
    display: flex;
    gap: 36px;
    margin-left: auto;
}

.task-sub {
    display: flex;
    align-items: center;
    gap: 13px;
    height: 28px;
    margin: 4px 0 0 58px;
    color: #64778c;
    font-size: 25px;
    letter-spacing: 0;
}

.dot {
    width: 12px;
    height: 12px;
    border-radius: 50%;
    background-color: currentColor;
}

.emoji-sm {
    width: 24px;
    height: 24px;
}

/* Bottom bar */
.bottom-bar {
    display: flex;
    align-items: center;
    gap: 42px;
    height: 108px;
    margin-top: auto;
    padding: 0 36px;
}

.icon-plus {
    padding: 6px;
}

.cloud {
    margin-left: auto;
}
```
